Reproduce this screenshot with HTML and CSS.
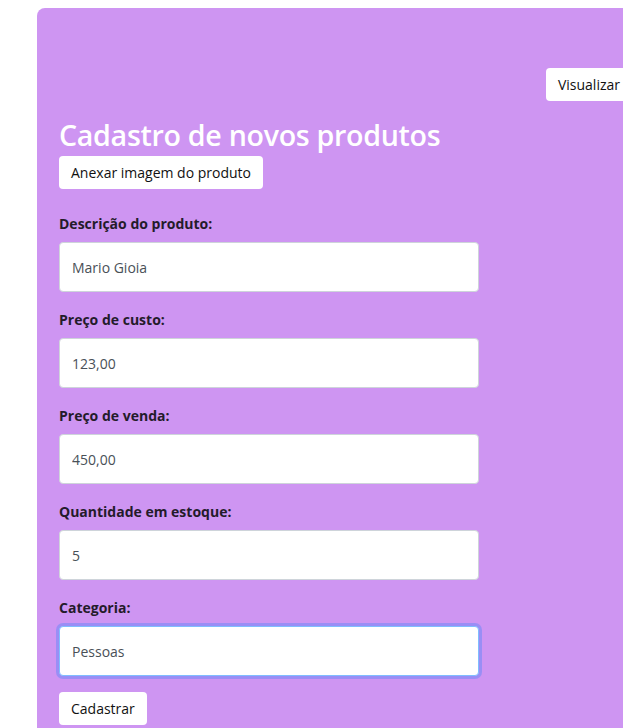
FILE: index.html
```html
<!DOCTYPE html>
<html lang="pt-BR">
<head>
<meta charset="utf-8">
<title>Cadastro de novos produtos</title>
<link rel="stylesheet" href="styles.css">
</head>
<body>
<main class="panel">
  <div class="topbar">
    <button class="btn" type="button">Visualizar</button>
  </div>
  <h1 class="title">Cadastro de novos produtos</h1>
  <button class="btn attach" type="button">Anexar imagem do produto</button>
  <form class="form">
    <div class="field">
      <label class="label">Descrição do produto:</label>
      <input class="input" type="text" value="Mario Gioia">
    </div>
    <div class="field">
      <label class="label">Preço de custo:</label>
      <input class="input" type="text" value="123,00">
    </div>
    <div class="field">
      <label class="label">Preço de venda:</label>
      <input class="input" type="text" value="450,00">
    </div>
    <div class="field">
      <label class="label">Quantidade em estoque:</label>
      <input class="input" type="text" value="5">
    </div>
    <div class="field">
      <label class="label">Categoria:</label>
      <input class="input focused" type="text" value="Pessoas">
    </div>
    <div class="actions">
      <button class="btn" type="button">Cadastrar</button>
    </div>
  </form>
</main>
</body>
</html>
```

FILE: styles.css
```css
html, body {
  margin: 0;
  padding: 0;
  overflow: hidden;
  background: #ffffff;
}
body {
  padding: 8px 0 0 37px;
  font-family: "Open Sans", "Noto Sans", sans-serif;
}
.panel {
  width: 617px;
  height: 720px;
  overflow: hidden;
  box-sizing: border-box;
  background: #ce95f2;
  border-radius: 8px 0 0 0;
  padding: 60px 22px 0 22px;
}
.topbar {
  display: flex;
  justify-content: flex-end;
  height: 33px;
}
.btn {
  font-family: "Open Sans", "Noto Sans", sans-serif;
  font-size: 14px;
  color: #111;
  background: #fff;
  border: none;
  border-radius: 4px;
  height: 33px;
  padding: 0 12px;
  line-height: 33px;
  cursor: pointer;
}
.title {
  margin: 14px 0 0 0;
  font-size: 28.6px;
  font-weight: 600;
  color: #fff;
  line-height: 40px;
  letter-spacing: -0.3px;
}
.attach {
  margin-top: 1px;
}
.form {
  margin-top: 25px;
  width: 420px;
}
.field {
  display: flex;
  flex-direction: column;
  gap: 8px;
  margin-bottom: 18px;
}
.label {
  font-size: 14px;
  font-weight: 700;
  line-height: 20px;
  color: #241b2a;
}
.input {
  box-sizing: border-box;
  height: 50px;
  width: 420px;
  padding: 0 12px;
  font-family: "Open Sans", "Noto Sans", sans-serif;
  font-size: 14px;
  color: #495057;
  background: #fff;
  border: 1px solid #ced4da;
  border-radius: 4px;
  outline: none;
}
.input.focused {
  border-color: #80bdff;
  box-shadow: 0 0 0 3px rgba(0, 123, 255, 0.25);
}
.actions {
  margin-top: -2px;
}
```
